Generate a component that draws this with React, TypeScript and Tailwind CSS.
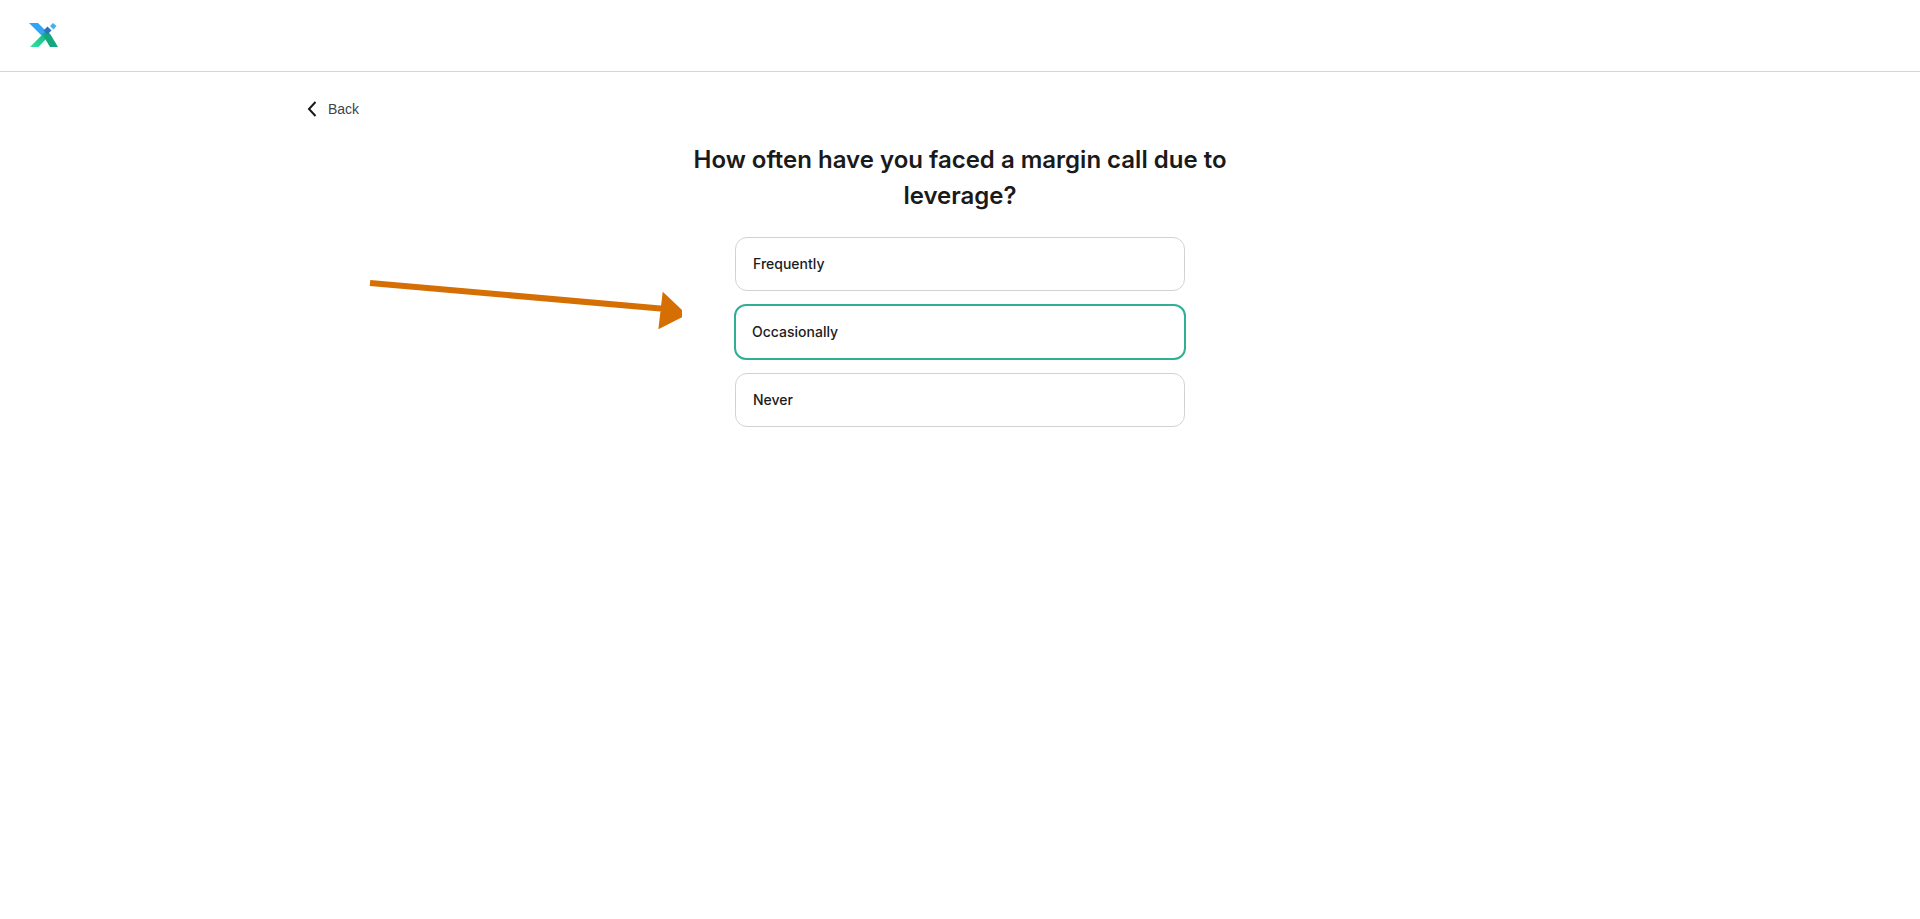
const options = ['Frequently', 'Occasionally', 'Never'];

function Logo() {
  return (
    <svg width="30" height="26" viewBox="0 0 30 26">
      <defs>
        <linearGradient id="x-green" x1="0" y1="1" x2="1" y2="0">
          <stop offset="0" stopColor="#2ee6a0" />
          <stop offset="1" stopColor="#12b886" />
        </linearGradient>
      </defs>
      <path d="M0 1h9l9 9-4.500 4.500z" fill="#33a3f4" />
      <path d="M1 25l12.500-12.500 4 4L9.500 25z" fill="url(#x-green)" />
      <path d="M13.500 12.500l4-4 4 4 7.500 12.500h-8z" fill="#12a77c" />
      <path d="M14.500 8.500l4-4 4 4-4 4z" fill="#2f6fc0" />
      <path d="M21 4l3-3 3.500 3-3 3.500z" fill="#3fb0f5" />
    </svg>
  );
}

function Arrow() {
  return (
    <svg className="absolute left-[368px] top-[280px]" width="314" height="50" viewBox="0 0 314 50">
      <path d="M2 3l296 26M297 18l17 16-20 10z" fill="#d56f03" stroke="#d56f03" strokeWidth="6" strokeLinejoin="miter" />
    </svg>
  );
}

export default function App() {
  return (
    <div className="relative min-h-[919px] bg-white font-['Inter',sans-serif]">
      <header className="flex h-[72px] items-center border-b border-[#d4d4d4] pb-[1px] pl-[29px]">
        <Logo />
      </header>

      <main className="mx-auto w-[1306px]">
        <button className="mt-[22px] flex h-[30px] items-center gap-[11px] font-['Liberation_Sans',sans-serif] text-sm text-[#3f4448]">
          <svg width="10" height="16" viewBox="0 0 10 16" fill="none" stroke="#17191c" strokeWidth="2">
            <path d="M8.500 1L2 8l6.500 7" />
          </svg>
          Back
        </button>

        <h1 className="mx-auto mt-[18px] w-[560px] text-center text-2xl leading-9 font-semibold text-[#1a1a1a]">
          How often have you faced a margin call due to leverage?
        </h1>

        <div className="mx-auto mt-[23px] flex w-[452px] flex-col items-center gap-[13px]">
          {options.map((label) =>
            label === 'Occasionally' ? (
              <div
                key={label}
                className="flex h-[56px] w-[452px] items-center rounded-xl border-2 border-[#2fb094] pl-[16px] text-sm font-medium text-[#1c1c1c]"
              >
                {label}
              </div>
            ) : (
              <div
                key={label}
                className="flex h-[54px] w-[450px] items-center rounded-xl border border-[#d2d2d2] pl-[17px] text-sm font-medium text-[#1c1c1c]"
              >
                {label}
              </div>
            ),
          )}
        </div>
      </main>

      <Arrow />
    </div>
  );
}
